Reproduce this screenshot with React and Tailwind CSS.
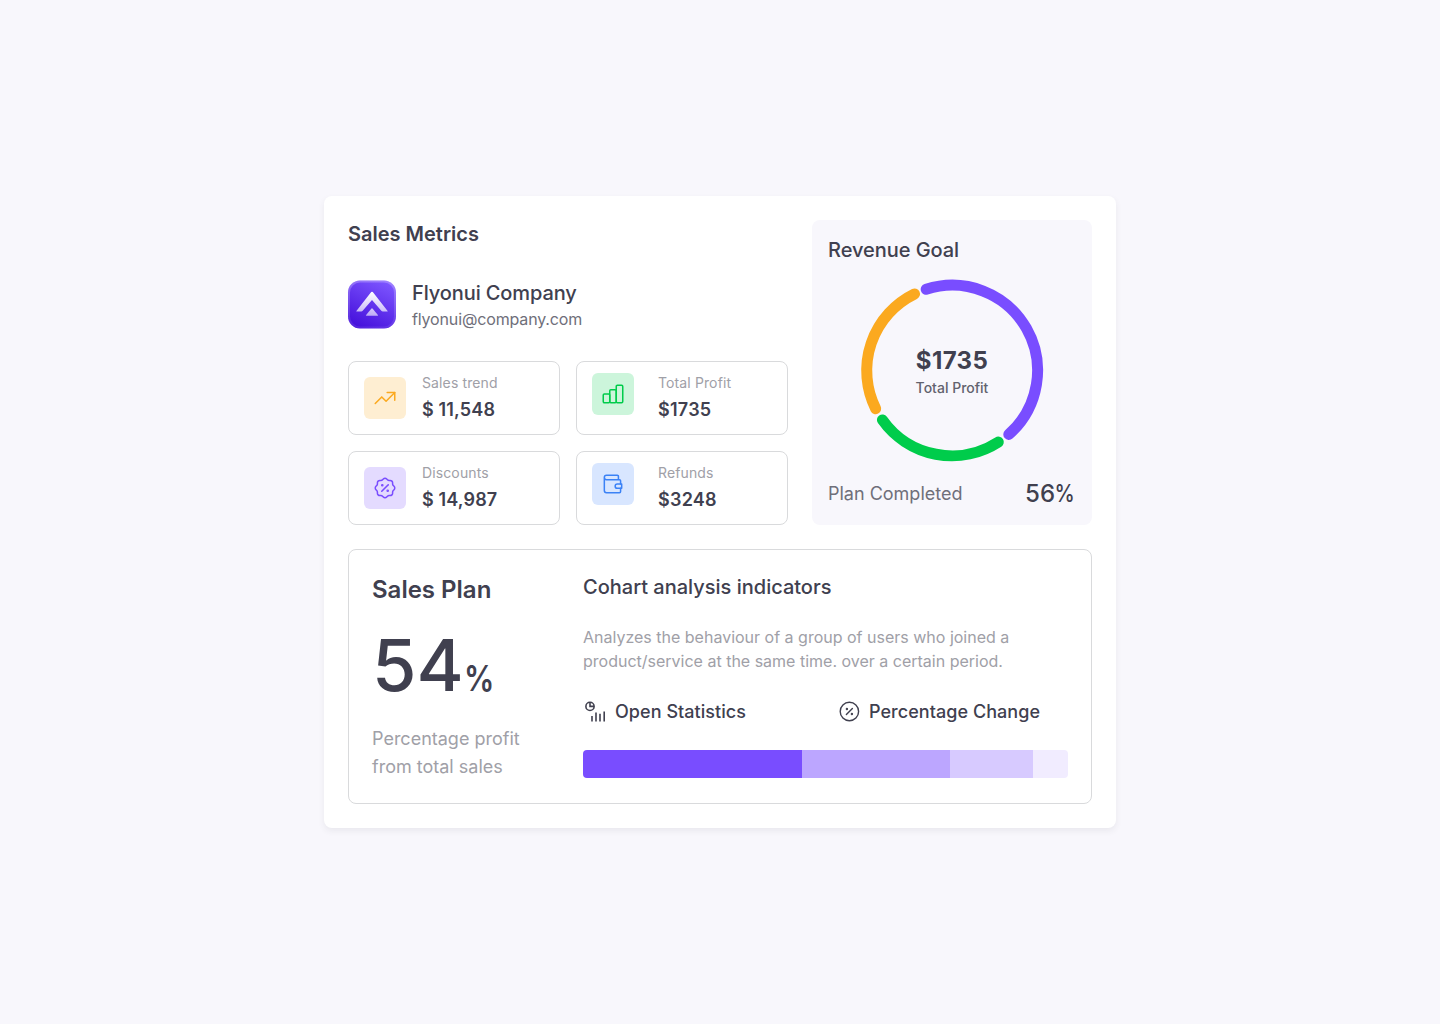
import React from "react";

const iconProps = {
  viewBox: "0 0 24 24",
  fill: "none",
  stroke: "currentColor",
  strokeWidth: 1.4,
  strokeLinecap: "round",
  strokeLinejoin: "round",
};

const TrendIcon = () => (
  <svg {...iconProps} className="size-[26px]">
    <path d="M3 17l6-6 4 4 8-8" />
    <path d="M14 7h7v7" />
  </svg>
);

const DiscountIcon = () => (
  <svg {...iconProps} className="size-[26px]">
    <path d="M9 15l6-6" />
    <circle cx="9.5" cy="9.5" r=".5" fill="currentColor" />
    <circle cx="14.5" cy="14.5" r=".5" fill="currentColor" />
    <path d="M5 7.2A2.2 2.2 0 0 1 7.2 5h1a2.2 2.2 0 0 0 1.55-.64l.7-.7a2.2 2.2 0 0 1 3.12 0l.7.7c.412.41.97.64 1.55.64h1a2.2 2.2 0 0 1 2.2 2.2v1c0 .58.23 1.138.64 1.55l.7.7a2.2 2.2 0 0 1 0 3.12l-.7.7a2.2 2.2 0 0 0-.64 1.55v1a2.2 2.2 0 0 1-2.2 2.2h-1a2.2 2.2 0 0 0-1.55.64l-.7.7a2.2 2.2 0 0 1-3.12 0l-.7-.7a2.2 2.2 0 0 0-1.55-.64h-1a2.2 2.2 0 0 1-2.2-2.2v-1a2.2 2.2 0 0 0-.64-1.55l-.7-.7a2.2 2.2 0 0 1 0-3.12l.7-.7A2.2 2.2 0 0 0 5 8.2v-1" />
  </svg>
);

const BarsIcon = () => (
  <svg {...iconProps} className="size-[26px]">
    <rect x="3" y="12" width="6" height="8" rx="1" />
    <rect x="9" y="8" width="6" height="12" rx="1" />
    <rect x="15" y="4" width="6" height="16" rx="1" />
  </svg>
);

const WalletIcon = () => (
  <svg {...iconProps} className="size-[26px]">
    <path d="M17 8V5a1 1 0 0 0-1-1H6a2 2 0 0 0 0 4h12a1 1 0 0 1 1 1v3m0 4v3a1 1 0 0 1-1 1H6a2 2 0 0 1-2-2V6" />
    <path d="M20 12v4h-4a2 2 0 0 1 0-4h4" />
  </svg>
);

const StatsIcon = () => (
  <svg viewBox="0 0 24 24" fill="none" stroke="currentColor" strokeWidth="1.6" className="size-6">
    <circle cx="7" cy="6.4" r="4.1" />
    <path d="M7 2.3v4.1h4.1" />
    <path d="M9 16V21.5M13 12.5v9M17 13.7V21.5M21.2 11.5v10" />
  </svg>
);

const PercentCircleIcon = () => (
  <svg {...iconProps} className="size-6">
    <circle cx="12.4" cy="11.5" r="9.2" />
    <path d="M9.4 14.5l6-6" />
    <circle cx="9.9" cy="9" r=".5" fill="currentColor" />
    <circle cx="14.9" cy="14" r=".5" fill="currentColor" />
  </svg>
);

const Logo = () => (
  <svg viewBox="0 0.5 48 48" className="size-12 overflow-visible">
    <defs>
      <linearGradient id="tile" x1="36" y1="0" x2="12" y2="48" gradientUnits="userSpaceOnUse">
        <stop stopColor="#7d55ff" />
        <stop offset="1" stopColor="#4510db" />
      </linearGradient>
      <linearGradient id="rim" x1="24" y1="0" x2="24" y2="48" gradientUnits="userSpaceOnUse">
        <stop stopColor="#fff" stopOpacity=".25" />
        <stop offset="1" stopColor="#fff" stopOpacity=".08" />
      </linearGradient>
      <linearGradient id="mark" x1="24" y1="11" x2="24" y2="36" gradientUnits="userSpaceOnUse">
        <stop stopColor="#fff" />
        <stop offset="1" stopColor="#fff" stopOpacity=".6" />
      </linearGradient>
    </defs>
    <rect width="48" height="48" rx="12" fill="url(#tile)" />
    <rect x="1" y="1" width="46" height="46" rx="11" fill="none" stroke="url(#rim)" strokeWidth="2" />
    <path d="M23.2 11.6q.8-.9 1.6 0L39.6 30.4q.4.6-.4.6h-4.4q-.9 0-1.5-.7L24 19.6l-9.3 10.7q-.6.7-1.5.7H8.8q-.8 0-.4-.6Z" fill="url(#mark)" />
    <path d="M23.3 28.2q.7-.8 1.4 0l5.2 6.2q.6.8-.4.8h-11q-1 0-.4-.8Z" fill="url(#mark)" />
  </svg>
);

const Donut = () => (
  <svg viewBox="0 0.4 182 182" fill="none" strokeWidth="11" strokeLinecap="round" className="size-[182px] overflow-visible">
    <path d="M65.2 9.7A85.3 85.3 0 0 1 147.8 154.8" stroke="#794dff" />
    <path d="M137.3 162.5A85.3 85.3 0 0 1 21.4 140.3" stroke="#00cc4b" />
    <path d="M14.7 129.1A85.3 85.3 0 0 1 53.5 14.4" stroke="#fba91f" />
  </svg>
);

function Metric({ icon, tone, label, value, raised }) {
  return (
    <div className="flex h-[74px] rounded-lg border border-[#d9dadc] pl-[15px]">
      <div className={`flex size-[42px] items-center justify-center rounded-md ${tone} ${raised ? "mt-[11px]" : "mt-[15px]"}`}>{icon}</div>
      <div className={`mt-[11px] ${raised ? "ml-6" : "ml-4"}`}>
        <p className="text-sm leading-5 tracking-[0.12px] text-[#a0a0a7]">{label}</p>
        <p className={`mt-[3px] text-lg leading-7 font-semibold ${raised ? "tracking-[0.25px]" : "tracking-[0.15px]"}`}>{value}</p>
      </div>
    </div>
  );
}

const segments = [
  ["bg-[#794dff]", 219],
  ["bg-[#bca6ff]", 148],
  ["bg-[#d7caff]", 83],
  ["bg-[#f1ecff]", 35],
];

export default function App() {
  return (
    <main className="flex h-[1024px] w-[1440px] items-center justify-center bg-[#f8f7fc] font-['Inter',sans-serif] text-[#40404f]">
      <section className="flex h-[632px] w-[792px] flex-col gap-6 rounded-lg bg-white p-6 shadow-[0_3px_6px_rgba(64,64,79,0.08)]">
        <div className="flex h-[305px] gap-6">
          <div className="w-[440px]">
            <h2 className="text-xl leading-7 font-semibold">Sales Metrics</h2>
            <div className="mt-[33px] flex h-12 items-center gap-4">
              <Logo />
              <div>
                <p className="text-xl leading-7 font-medium tracking-[-0.1px]">Flyonui Company</p>
                <p className="text-base leading-6 tracking-[-0.15px] text-[#6f6f7a]">flyonui@company.com</p>
              </div>
            </div>
            <div className="mt-8 grid grid-cols-2 gap-4">
              <Metric icon={<TrendIcon />} tone="bg-[#feeed2] text-[#fba91f]" label="Sales trend" value="$ 11,548" />
              <Metric icon={<BarsIcon />} tone="bg-[#ccf5db] text-[#00cc4b]" label="Total Profit" value="$1735" raised />
              <Metric icon={<DiscountIcon />} tone="bg-[#e4dbff] text-[#794dff]" label="Discounts" value="$ 14,987" />
              <Metric icon={<WalletIcon />} tone="bg-[#d8e6ff] text-[#3b82f6]" label="Refunds" value="$3248" raised />
            </div>
          </div>
          <div className="flex w-[280px] flex-col rounded-lg bg-[#f8f7fc] p-4">
            <h3 className="text-xl leading-7 font-medium tracking-[-0.05px]">Revenue Goal</h3>
            <div className="mt-4 grid place-items-center">
              <div className="col-start-1 row-start-1"><Donut /></div>
              <div className="col-start-1 row-start-1 text-center">
                <p className="text-2xl leading-8 font-bold tracking-[0.4px]">$1735</p>
                <p className="mt-px text-sm leading-5 font-medium text-[#62626e]">Total Profit</p>
              </div>
            </div>
            <div className="mt-4 flex items-center justify-between pr-1">
              <span className="text-lg leading-7 text-[#6f6f7a]">Plan Completed</span>
              <span className="flex text-2xl leading-8 font-medium">56<span className="-ml-[3px] w-[20px] origin-left scale-x-[0.85] pl-[3px]">%</span></span>
            </div>
          </div>
        </div>
        <div className="flex h-[255px] rounded-lg border border-[#d9dadc] px-[23px]">
          <div className="w-[211px]">
            <h2 className="mt-6 text-2xl leading-8 font-semibold">Sales Plan</h2>
            <p className="mt-[23px] text-7xl leading-[72px] font-medium">
              54<span className="inline-block origin-left scale-x-[0.84] text-4xl font-semibold">%</span>
            </p>
            <p className="mt-6 w-40 text-lg leading-7 text-[#a0a0a7]">Percentage profit from total sales</p>
          </div>
          <div className="w-[485px]">
            <h3 className="mt-[23px] text-xl leading-7 font-medium">Cohart analysis indicators</h3>
            <p className="mt-6 w-[450px] text-base leading-6 text-[#a0a0a7]">
              Analyzes the behaviour of a group of users who joined a product/service at the same time. over a certain period.
            </p>
            <div className="mt-[25px] flex h-7 items-center text-lg leading-7 font-medium tracking-[0.05px]">
              <div className="flex w-[254px] items-center gap-2"><StatsIcon />Open Statistics</div>
              <div className="flex items-center gap-2"><PercentCircleIcon />Percentage Change</div>
            </div>
            <div className="mt-6 flex h-7 overflow-hidden rounded">
              {segments.map(([tone, width]) => (
                <div key={tone} className={tone} style={{ width }} />
              ))}
            </div>
          </div>
        </div>
      </section>
    </main>
  );
}
